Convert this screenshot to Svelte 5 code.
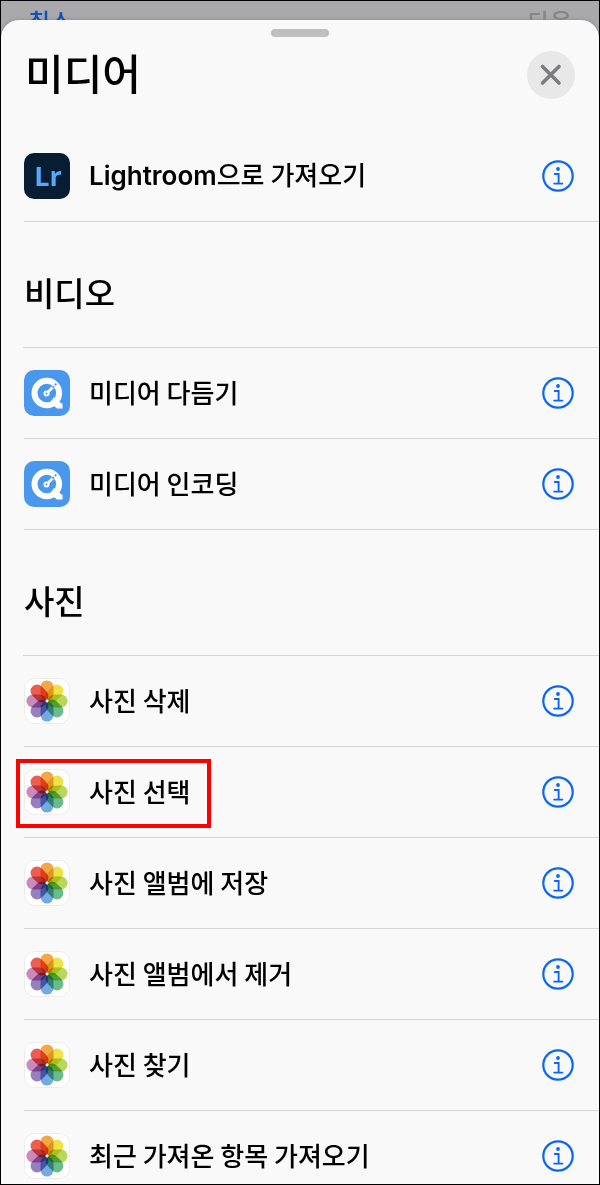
<script>
  const sections = [
    {
      title: '',
      items: [{ icon: 'lightroom', app: 'Lightroom', label: '으로 가져오기' }]
    },
    {
      title: '비디오',
      items: [
        { icon: 'quicktime', label: '미디어 다듬기' },
        { icon: 'quicktime', label: '미디어 인코딩' }
      ]
    },
    {
      title: '사진',
      items: [
        { icon: 'photos', label: '사진 삭제' },
        { icon: 'photos', label: '사진 선택', marked: true },
        { icon: 'photos', label: '사진 앨범에 저장' },
        { icon: 'photos', label: '사진 앨범에서 제거' },
        { icon: 'photos', label: '사진 찾기' },
        { icon: 'photos', label: '최근 가져온 항목 가져오기' }
      ]
    }
  ];

  // clockwise, starting at the top
  const petals = [
    '#f2a33c',
    '#eee13c',
    '#b4d653',
    '#62b984',
    '#6ba6e0',
    '#9179bd',
    '#c884b8',
    '#ea5546'
  ];
</script>

<div class="screen">
  <div class="behind">
    <button class="cancel">취소</button>
    <button class="next" disabled>다음</button>
  </div>

  <main class="sheet">
    <div class="grabber"></div>

    <header>
      <h1>미디어</h1>
      <button class="close" aria-label="닫기">
        <svg viewBox="0 0 48 48" width="48" height="48">
          <path d="M15.5 15.5 L32 32 M32 15.5 L15.5 32" stroke="#7c7c80" stroke-width="3.6" stroke-linecap="round" />
        </svg>
      </button>
    </header>

    {#each sections as section}
      <section>
        {#if section.title}
          <h2>{section.title}</h2>
        {/if}
        <ul>
          {#each section.items as item}
            <li>
              <button class="action">
                {#if item.icon === 'lightroom'}
                  <svg class="icon" viewBox="0 0 46 46">
                    <rect width="46" height="46" rx="10" fill="#071d34" />
                    <text class="lr" x="24" y="33" text-anchor="middle">Lr</text>
                  </svg>
                {:else if item.icon === 'quicktime'}
                  <svg class="icon" viewBox="0 0 46 46">
                    <rect width="46" height="46" rx="10" fill="#4a98ee" />
                    <circle cx="22.8" cy="23" r="12.3" fill="none" stroke="#fff" stroke-width="6" />
                    <path d="M30 27 L37.5 33.5 H38.5 V38.5 H33 L26 33 Z" fill="#fff" />
                    <path d="M22.5 23.5 L29 17" stroke="#fff" stroke-width="2.6" />
                    <path d="M28.5 17.5 L32.5 13.5" stroke="#4a98ee" stroke-width="1.8" stroke-dasharray="2 1.4" />
                    <circle cx="22.5" cy="23.5" r="3" fill="#fff" />
                    <circle cx="22.5" cy="23.5" r="1" fill="#4a98ee" />
                  </svg>
                {:else}
                  <svg class="icon" viewBox="0 0 46 46">
                    <rect x="0.5" y="0.5" width="45" height="45" rx="10" fill="#fff" stroke="#ececec" />
                    {#each petals as color, i}
                      <rect
                        class="petal"
                        x="16.5"
                        y="2.4"
                        width="13"
                        height="20"
                        rx="6.5"
                        fill={color}
                        transform="rotate({i * 45} 23 23)"
                      />
                    {/each}
                    <circle cx="23" cy="23" r="1.4" fill="#fff" />
                  </svg>
                {/if}
                <span>{#if item.app}<span class="app">{item.app}</span>{/if}{item.label}</span>
              </button>
              <button class="info" aria-label="{item.app ?? ''}{item.label} 정보">
                <svg viewBox="0 0 32 32" width="32" height="32" fill="none" stroke="#0a66f5">
                  <circle cx="16" cy="16" r="14.7" stroke-width="2.2" />
                  <circle cx="16" cy="9" r="1.9" fill="#0a66f5" stroke="none" />
                  <path d="M12.8 14 H16.6 V23.6 M12.2 23.6 H20.4" stroke-width="1.9" stroke-linecap="round" />
                </svg>
              </button>
              {#if item.marked}
                <div class="marker"></div>
              {/if}
            </li>
          {/each}
        </ul>
      </section>
    {/each}
  </main>
</div>

<style>
  .screen {
    box-sizing: border-box;
    height: 100vh;
    overflow: hidden;
    border: 1px solid #000;
    background: #a9a8ab;
    color: #000;
    font-family: "Noto Sans CJK KR", sans-serif;
    font-weight: 500;
  }

  button {
    margin: 0;
    padding: 0;
    border: 0;
    background: none;
    color: inherit;
    font: inherit;
    text-align: left;
    cursor: pointer;
  }

  .behind {
    display: flex;
    justify-content: space-between;
    height: 19px;
    padding: 0 27px;
    overflow: hidden;
    font-size: 24px;
    line-height: 40px;
  }

  .behind button {
    height: 40px;
  }

  .cancel {
    color: #0f51bd;
  }

  .next {
    color: #858487;
  }

  .sheet {
    padding-top: 9px;
    border-radius: 18px 18px 0 0;
    background: #f9f9f9;
    box-shadow: 0 0 4px rgba(0, 0, 0, 0.2);
  }

  .grabber {
    width: 58px;
    height: 8px;
    margin: 0 auto;
    border-radius: 4px;
    background: #bfbfc0;
  }

  header {
    display: flex;
    align-items: center;
    justify-content: space-between;
    padding: 14px 24px 32px;
  }

  h1 {
    margin: 0;
    padding-bottom: 6px;
    font-size: 42px;
    font-weight: 500;
    line-height: 42px;
  }

  .close {
    width: 48px;
    height: 48px;
    border-radius: 50%;
    background: #e8e8e9;
  }

  .close svg,
  .info svg {
    display: block;
  }

  h2 {
    margin: 0;
    padding: 46px 23px 31px;
    border-bottom: 1px solid;
    border-image: linear-gradient(to right, transparent 23px, #d5d5d6 23px) 1;
    font-size: 33px;
    font-weight: 500;
    line-height: 48px;
  }

  ul {
    margin: 0;
    padding: 0 0 0 23px;
    list-style: none;
  }

  li {
    position: relative;
    display: flex;
    align-items: center;
    height: 90px;
    padding-right: 25px;
    border-bottom: 1px solid #d5d5d6;
  }

  .action {
    display: flex;
    flex: 1;
    align-items: center;
    gap: 19px;
    font-size: 26px;
    line-height: 36px;
  }

  .action > span {
    padding-bottom: 2px;
  }

  .icon {
    width: 46px;
    height: 46px;
  }

  .app {
    font-family: Inter, sans-serif;
    font-weight: 600;
  }

  .lr {
    fill: #58a8fb;
    font-family: "Open Sans", sans-serif;
    font-size: 27px;
    font-weight: 700;
  }

  .petal {
    mix-blend-mode: multiply;
    opacity: 0.95;
  }

  /* frame around the step to tap */
  .marker {
    position: absolute;
    top: 12px;
    left: -8px;
    box-sizing: border-box;
    width: 195px;
    height: 69px;
    border: 4px solid #f00;
    pointer-events: none;
  }
</style>
